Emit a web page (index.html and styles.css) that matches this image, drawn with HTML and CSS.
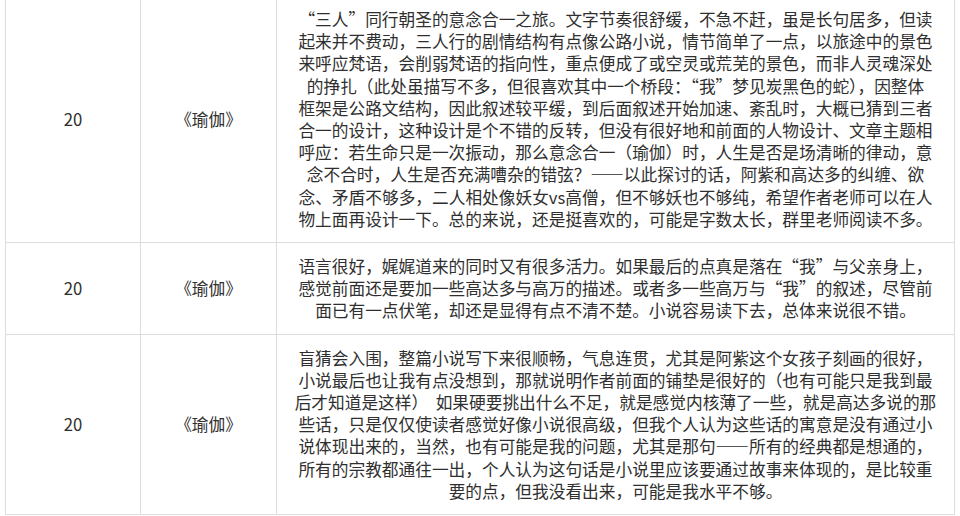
FILE: index.html
```html
<!DOCTYPE html>
<html lang="zh-CN">
<head>
<meta charset="utf-8">
<title>评审意见</title>
<link rel="stylesheet" href="styles.css">
</head>
<body>
<table class="review-table">
  <colgroup>
    <col class="col-score">
    <col class="col-title">
    <col class="col-comment">
  </colgroup>
  <tbody>
    <tr>
      <td class="score">20</td>
      <td class="title">《瑜伽》</td>
      <td class="comment">“三人”同行朝圣的意念合一之旅。文字节奏很舒缓，不急不赶，虽是长句居多，但读<br>起来并不费动，三人行的剧情结构有点像公路小说，情节简单了一点，以旅途中的景色<br>来呼应梵语，会削弱梵语的指向性，重点便成了或空灵或荒芜的景色，而非人灵魂深处<br>的挣扎（此处虽描写不多，但很喜欢其中一个桥段：“我”梦见炭黑色的蛇），因整体<br>框架是公路文结构，因此叙述较平缓，到后面叙述开始加速、紊乱时，大概已猜到三者<br>合一的设计，这种设计是个不错的反转，但没有很好地和前面的人物设计、文章主题相<br>呼应：若生命只是一次振动，那么意念合一（瑜伽）时，人生是否是场清晰的律动，意<br>念不合时，人生是否充满嘈杂的错弦？——以此探讨的话，阿紫和高达多的纠缠、欲<br>念、矛盾不够多，二人相处像妖女vs高僧，但不够妖也不够纯，希望作者老师可以在人<br>物上面再设计一下。总的来说，还是挺喜欢的，可能是字数太长，群里老师阅读不多。</td>
    </tr>
    <tr>
      <td class="score">20</td>
      <td class="title">《瑜伽》</td>
      <td class="comment">语言很好，娓娓道来的同时又有很多活力。如果最后的点真是落在“我”与父亲身上，<br>感觉前面还是要加一些高达多与高万的描述。或者多一些高万与“我”的叙述，尽管前<br>面已有一点伏笔，却还是显得有点不清不楚。小说容易读下去，总体来说很不错。</td>
    </tr>
    <tr>
      <td class="score">20</td>
      <td class="title">《瑜伽》</td>
      <td class="comment">盲猜会入围，整篇小说写下来很顺畅，气息连贯，尤其是阿紫这个女孩子刻画的很好，<br>小说最后也让我有点没想到，那就说明作者前面的铺垫是很好的（也有可能只是我到最<br>后才知道是这样）&nbsp;&nbsp;如果硬要挑出什么不足，就是感觉内核薄了一些，就是高达多说的那<br>些话，只是仅仅使读者感觉好像小说很高级，但我个人认为这些话的寓意是没有通过小<br>说体现出来的，当然，也有可能是我的问题，尤其是那句——所有的经典都是想通的，<br>所有的宗教都通往一出，个人认为这句话是小说里应该要通过故事来体现的，是比较重<br>要的点，但我没看出来，可能是我水平不够。</td>
    </tr>
  </tbody>
</table>
</body>
</html>
```

FILE: styles.css
```css
html, body {
  margin: 0;
  padding: 0;
  background: #ffffff;
}

body {
  font-family: "Noto Sans CJK SC", "Noto Sans", sans-serif;
  color: #2f2f2f;
  overflow: hidden;
}

.review-table {
  margin: -5px 0 0 5px;
  border-collapse: collapse;
  table-layout: fixed;
  width: 949px;
}

.col-score { width: 135px; }
.col-title { width: 136px; }
.col-comment { width: 678px; }

.review-table td {
  border: 1px solid #dddddd;
  font-size: 16.7px;
  line-height: 22.2px;
  padding: 12px 4px;
  text-align: center;
  vertical-align: middle;
}

.comment {
  white-space: nowrap;
}
```
